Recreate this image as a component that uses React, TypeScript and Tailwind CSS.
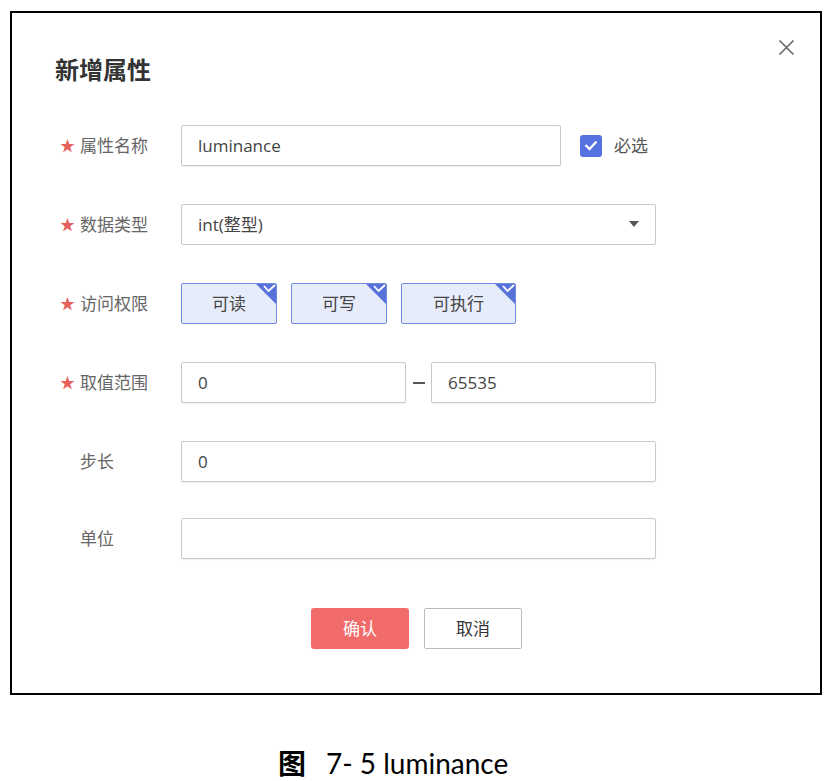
import React from 'react';

const FONT = '"Open Sans", "Noto Sans CJK SC", sans-serif';

const Label: React.FC<{ text: string; required?: boolean }> = ({ text, required }) => (
  <div className="flex items-center w-[121px] shrink-0 text-[17px] text-[#666]">
    <span className={`w-[20px] text-[15px] ${required ? 'text-[#e8605c]' : 'text-transparent'}`}>★</span>
    <span>{text}</span>
  </div>
);

const Field: React.FC<{ value?: string; className?: string }> = ({ value, className }) => (
  <div
    className={`h-[41px] border border-[#c9c9c9] rounded-[2px] bg-white flex items-center px-[16px] text-[17px] text-[#444] shadow-[0_1px_1px_rgba(0,0,0,0.06)] ${className ?? ''}`}
  >
    {value}
  </div>
);

const Tag: React.FC<{ text: string; width: string }> = ({ text, width }) => (
  <div
    className={`relative h-[41px] ${width} border border-[#6f8ae0] rounded-[2px] bg-[#e7ecfa] flex items-center justify-center text-[17px] text-[#444] overflow-hidden`}
  >
    {text}
    <svg className="absolute top-0 right-0" width="20" height="20" viewBox="0 0 20 20">
      <polygon points="0,0 20,0 20,20" fill="#5672d8" />
      <polyline points="8,2 12.5,7 19,1" fill="none" stroke="#fff" strokeWidth="1.8" />
    </svg>
  </div>
);

export default function App() {
  return (
    <div className="bg-white w-[830px] h-[781px] pt-[11px] pl-[10px]" style={{ fontFamily: FONT }}>
      <div className="relative w-[812px] h-[684px] border-2 border-black">
        <button className="absolute top-[26px] right-[25px] w-[17px] h-[17px]">
          <svg width="17" height="17" viewBox="0 0 17 17">
            <path d="M1.5 1.5 L15.5 15.5 M15.5 1.5 L1.5 15.5" stroke="#666" strokeWidth="1.6" />
          </svg>
        </button>

        <h2 className="pl-[43px] pt-[41px] text-[24px] leading-[32px] font-bold text-[#333]">新增属性</h2>

        <div className="pl-[48px] pt-[39px] flex flex-col gap-[38px]">
          <div className="flex items-center">
            <Label text="属性名称" required />
            <Field value="luminance" className="w-[380px]" />
            <div className="ml-[19px] w-[22px] h-[22px] rounded-[3px] bg-[#5672e0] flex items-center justify-center">
              <svg width="14" height="11" viewBox="0 0 14 11">
                <polyline points="1.5,5 5.5,9 12.5,1.5" fill="none" stroke="#fff" strokeWidth="2.4" />
              </svg>
            </div>
            <span className="ml-[12px] text-[17px] text-[#555]">必选</span>
          </div>

          <div className="flex items-center">
            <Label text="数据类型" required />
            <div className="w-[475px] h-[41px] border border-[#c9c9c9] rounded-[2px] bg-white flex items-center justify-between pl-[16px] pr-[16px] text-[17px] text-[#444]">
              <span>int(整型)</span>
              <svg width="10" height="7" viewBox="0 0 10 7">
                <polygon points="0,0 10,0 5,6" fill="#555" />
              </svg>
            </div>
          </div>

          <div className="flex items-center">
            <Label text="访问权限" required />
            <div className="flex gap-[14px]">
              <Tag text="可读" width="w-[96px]" />
              <Tag text="可写" width="w-[96px]" />
              <Tag text="可执行" width="w-[115px]" />
            </div>
          </div>

          <div className="flex items-center">
            <Label text="取值范围" required />
            <Field value="0" className="w-[225px]" />
            <span className="w-[25px] flex justify-center">
              <span className="block w-[12px] h-[2px] bg-[#555]" />
            </span>
            <Field value="65535" className="w-[225px]" />
          </div>

          <div className="flex items-center">
            <Label text="步长" />
            <Field value="0" className="w-[475px]" />
          </div>

          <div className="flex items-center -mt-[2px]">
            <Label text="单位" />
            <Field className="w-[475px]" />
          </div>
        </div>

        <div className="flex gap-[15px] pl-[299px] pt-[49px]">
          <button className="w-[98px] h-[41px] rounded-[3px] bg-[#f26b6b] text-white text-[17px]">确认</button>
          <button className="w-[98px] h-[41px] rounded-[2px] border border-[#bdbdbd] bg-white text-[#333] text-[17px]">取消</button>
        </div>
      </div>

      <div
        className="mt-[47px] pl-[268px] flex items-baseline text-[28px] text-black"
        style={{ fontFamily: 'Lato, "Noto Sans CJK SC", sans-serif' }}
      >
        <span className="font-bold mr-[20px]">图</span>
        <span>7- 5 luminance</span>
      </div>
    </div>
  );
}
